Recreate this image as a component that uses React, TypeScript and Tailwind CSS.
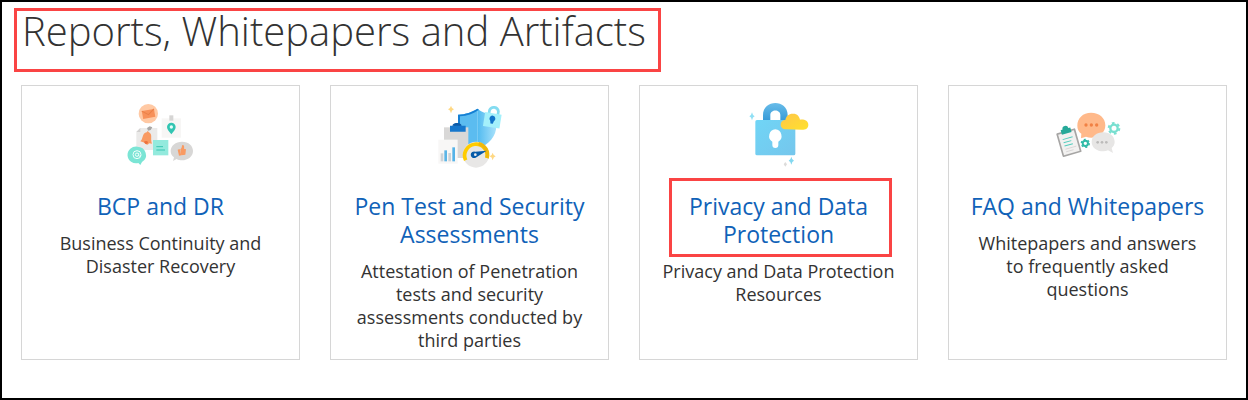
import type { ReactNode } from "react";

function ContinuityIcon() {
  return (
    <svg viewBox="0 0 240 216" className="h-18 w-20" aria-hidden="true">
      <circle cx="82" cy="47" r="29" fill="#ffc9a4" />
      <g transform="rotate(-10 82 47)">
        <rect x="64" y="36" width="37" height="24" fill="#f7915a" />
        <path d="M64 36l18 14 19-14" fill="none" stroke="#ea8048" strokeWidth="3" />
      </g>
      <path d="M122 61h58v58h-58z" fill="#f7f6f5" />
      <path d="M145 52h12v16h-12z" fill="#d6d5d4" />
      <path d="M151 109c-7-9-13-15-13-22a13 13 0 0 1 26 0c0 7-6 13-13 22z" fill="#32c5b2" />
      <circle cx="151" cy="87" r="5" fill="#e6fffb" />
      <path d="M58 90h51v66H46v-54z" fill="#ebeae9" />
      <path d="M46 102h12V90z" fill="#d2d1d0" />
      <path d="M78 90l8-5 8 3-5 8-8 2z" fill="#a8a7a6" />
      <path d="M58 130c9-6 4-24 19-27l3-4 4 4c12 7 3 18 9 34l-9-1c-2 6-10 5-11-1z" fill="#f99a62" />
      <path d="M69 131c4-3 10-2 12 1 0 8-10 8-12-1z" fill="#ed713c" />
      <path d="M96 126h46v46H96z" fill="#93eadd" />
      <path d="M106 146h20M106 156h26" stroke="#39c5b2" strokeWidth="3" />
      <path d="M49 146a26 25 0 0 1 14 46l-5 9-6-6a26 25 0 1 1-3-49z" fill="#7be5d5" />
      <circle cx="48" cy="170" r="12" fill="none" stroke="#effffc" strokeWidth="3" />
      <circle cx="48" cy="170" r="5" fill="none" stroke="#effffc" strokeWidth="3" />
      <path d="M53 165v9q5 4 7-3" fill="none" stroke="#effffc" strokeWidth="2" />
      <path d="M183 131c20 0 33 12 33 28s-15 28-33 28c-6 0-11-1-16-4l-11 6 3-11c-7-5-10-12-10-19 0-16 15-28 34-28z" fill="#d8d7d6" />
      <path d="M170 155l6-2 5 19-7 1zM178 154c7-5 3-12 7-13 5 0 5 6 4 11l6 2-2 16-12 2z" fill="#f99a62" />
    </svg>
  );
}

function SecurityIcon() {
  return (
    <svg viewBox="0 0 240 216" className="h-18 w-20" aria-hidden="true">
      <defs>
        <linearGradient id="shield-light" x2="1">
          <stop stopColor="#51baf0" />
          <stop offset="1" stopColor="#a9e2fb" />
        </linearGradient>
      </defs>
      <path d="M63 23q2 9 9 11-7 2-9 12-2-10-9-12 7-2 9-11z" fill="#ffd883" />
      <path d="M188 164q2 9 9 11-7 2-9 12-2-10-9-12 7-2 9-11z" fill="#ffd883" />
      <path d="M84 50c24-1 42-8 58-18v121c-35-13-58-40-58-70z" fill="#5bbcf0" />
      <path d="M142 32c17 12 34 18 57 18v33c0 31-22 57-57 70z" fill="url(#shield-light)" />
      <path d="M84 50c24-1 42-8 58-18l5 3c-18 12-36 19-57 20v28h-6z" fill="#157fd3" />
      <path d="M42 88h73v92H42z" fill="#d9d8d7" />
      <path d="M60 83h10q2-8 11-8t11 8h15v18H60z" fill="#1677cc" />
      <path d="M67 83q2-8 14-8t14 8z" fill="#0c5aa7" />
      <path d="M25 125h58v72H25z" fill="#f8f7f6" />
      <path d="M32 166h8v24h-8z" fill="#ccd3d7" />
      <path d="M43 157h8v33h-8z" fill="#5bb5e6" />
      <path d="M55 165h8v25h-8z" fill="#ccd3d7" />
      <path d="M67 148h8v42h-8z" fill="#55b3e8" />
      <circle cx="138" cy="170" r="39" fill="#e8e7e6" />
      <path d="M107 187a34 34 0 1 1 64-7" fill="none" stroke="#ffcc00" strokeWidth="11" />
      <path d="M146 137a34 34 0 0 1 25 43" fill="none" stroke="#f0b80c" strokeWidth="11" />
      <path d="M170 158l-33 21a10 10 0 1 1-1-18z" fill="#075ba8" />
      <circle cx="136" cy="170" r="4" fill="#eee" />
      <g transform="rotate(9 188 60)">
        <path d="M175 51V38a14 14 0 0 1 27 0v13" fill="none" stroke="#83dcf1" strokeWidth="8" />
        <path d="M163 46h50v42h-50z" fill="#a4f0fb" />
        <path d="M188 53a9 9 0 0 1 5 16l-2 8h-7l-2-8a9 9 0 0 1 6-16z" fill="#1173ca" />
      </g>
    </svg>
  );
}

function PrivacyIcon() {
  return (
    <svg viewBox="-18 0 240 216" className="h-18 w-20" aria-hidden="true">
      <defs>
        <linearGradient id="cloud-fill" x2="1" y2="1">
          <stop stopColor="#ffc64a" />
          <stop offset="1" stopColor="#ffe12c" />
        </linearGradient>
        <linearGradient id="lock-fill" x2="1" y2="1">
          <stop stopColor="#70d5f6" />
          <stop offset="1" stopColor="#75c6ec" />
        </linearGradient>
        <linearGradient id="shackle-fill" x2="0" y2="1">
          <stop stopColor="#68bce9" />
          <stop offset="1" stopColor="#389bd8" />
        </linearGradient>
      </defs>
      <path d="M54 67V51C54 3 128 3 128 51v16h-22V51c0-18-30-18-30 0v16z" fill="url(#shackle-fill)" />
      <rect x="31" y="66" width="120" height="106" rx="5" fill="url(#lock-fill)" />
      <path d="M91 94a20 20 0 0 1 9 37v10a9 9 0 0 1-18 0v-10a20 20 0 0 1 9-37z" fill="#fff" />
      <path d="M121 94a14 14 0 0 1 0-28c2-13 12-20 24-19 12 0 18 8 20 18 13-2 25 4 25 15s-8 15-19 15z" fill="url(#cloud-fill)" />
      <path d="M21 43q2 10 8 12-6 2-8 12-2-10-8-12 6-2 8-12z" fill="#91e0f5" />
      <path d="M139 176q2 10 8 12-6 2-8 12-2-10-8-12 6-2 8-12z" fill="#83d8f0" />
      <path d="M121 192l5 7-5 7-5-7z" fill="#dddcdb" />
    </svg>
  );
}

function FaqIcon() {
  return (
    <svg viewBox="0 -21 240 216" className="h-18 w-20" aria-hidden="true">
      <g transform="rotate(-16 63 112)">
        <rect x="33" y="76" width="59" height="74" rx="3" fill="#a6a5a4" />
        <path d="M38 81h49v64H38z" fill="#f2f1f0" />
        <path d="M49 70h6q0-9 9-9t9 9h6v14H49z" fill="#26a999" />
        <path d="M47 99h31M47 109h24M47 119h26" stroke="#52cdbd" strokeWidth="3" />
        <path d="M47 129h34M47 137h23" stroke="#cfcecd" strokeWidth="2" />
      </g>
      <path d="M129 23c25 0 43 16 43 38s-18 37-42 37c-6 0-11-1-16-3l-15 5 1-14c-8-6-12-14-12-24 0-23 17-39 41-39z" fill="#ffb98a" />
      <g fill="#f18144">
        <circle cx="114" cy="60" r="5" />
        <circle cx="130" cy="60" r="5" />
        <circle cx="146" cy="60" r="5" />
      </g>
      <path d="M166 82c20 0 34 12 34 29 0 8-4 14-9 18l4 15-15-8c-4 2-9 3-14 3-20 0-35-11-35-28s15-29 35-29z" fill="#e7e6e5" />
      <g fill="#bcbbba">
        <circle cx="149" cy="112" r="4" />
        <circle cx="162" cy="112" r="4" />
        <circle cx="175" cy="112" r="4" />
      </g>
      <circle cx="198" cy="70" r="11" fill="none" stroke="#78dfd0" strokeWidth="7" />
      <circle cx="198" cy="70" r="16" fill="none" stroke="#78dfd0" strokeWidth="6" strokeDasharray="8 8.75" />
      <circle cx="112" cy="115" r="8" fill="none" stroke="#31bba8" strokeWidth="6" />
      <circle cx="112" cy="115" r="12" fill="none" stroke="#31bba8" strokeWidth="4" strokeDasharray="6 6.57" />
    </svg>
  );
}

type Resource = {
  title: string;
  description: string;
  icon: ReactNode;
  highlighted?: boolean;
};

const resources: Resource[] = [
  {
    title: "BCP and DR",
    description: "Business Continuity and Disaster Recovery",
    icon: <ContinuityIcon />,
  },
  {
    title: "Pen Test and Security Assessments",
    description: "Attestation of Penetration tests and security assessments conducted by third parties",
    icon: <SecurityIcon />,
  },
  {
    title: "Privacy and Data Protection",
    description: "Privacy and Data Protection Resources",
    icon: <PrivacyIcon />,
    highlighted: true,
  },
  {
    title: "FAQ and Whitepapers",
    description: "Whitepapers and answers to frequently asked questions",
    icon: <FaqIcon />,
  },
];

function ResourceCard({ title, description, icon, highlighted }: Resource) {
  return (
    <article className="flex flex-col items-center border border-[#d6d6d6] px-5 pt-3 pb-[7px] text-center">
      {icon}
      <h2 className="relative mt-[22px] text-[23px] leading-7 text-[#1062b8]">
        <a href="#">{title}</a>
        {highlighted && (
          <span className="pointer-events-none absolute -top-3.5 right-[5px] -bottom-[9px] left-[9px] border-3 border-[#fa4444]" />
        )}
      </h2>
      <p className="mt-3 text-[18px] leading-[23px] text-[#333]">{description}</p>
    </article>
  );
}

export default function App() {
  return (
    <main className="border-2 border-black bg-white pt-1.5 pr-[19px] pb-[38px] pl-3 font-['Open_Sans','Noto_Sans',sans-serif]">
      <h1 className="w-fit border-3 border-[#fa4444] pr-3 pb-[18px] pl-[5px] text-[40px] leading-10 font-light text-[#333]">
        Reports, Whitepapers and Artifacts
      </h1>
      <section className="mt-[13px] ml-[7px] grid grid-cols-4 gap-[30px]">
        {resources.map((resource) => (
          <ResourceCard key={resource.title} {...resource} />
        ))}
      </section>
    </main>
  );
}
